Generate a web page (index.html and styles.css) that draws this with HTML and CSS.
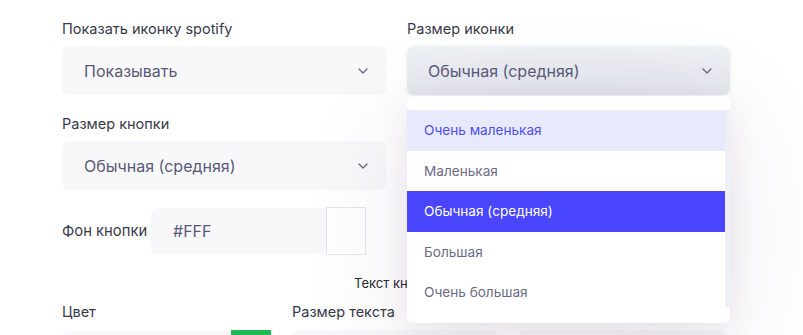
FILE: index.html
```html
<!DOCTYPE html>
<html lang="ru">
<head>
<meta charset="utf-8">
<link rel="stylesheet" href="styles.css">
</head>
<body>
<div class="page">
  <div class="row two">
    <div class="field">
      <div class="label">Показать иконку spotify</div>
      <div class="select">
        <span>Показывать</span>
        <svg class="chev" viewBox="0 0 10 6" width="10" height="6"><path d="M1 1l4 4 4-4" fill="none" stroke="#6b6b85" stroke-width="1.4" stroke-linecap="round" stroke-linejoin="round"/></svg>
      </div>
    </div>
    <div class="field">
      <div class="label">Размер иконки</div>
      <div class="select-wrap">
        <div class="select open">
          <span>Обычная (средняя)</span>
          <svg class="chev" viewBox="0 0 10 6" width="10" height="6"><path d="M1 1l4 4 4-4" fill="none" stroke="#6b6b85" stroke-width="1.4" stroke-linecap="round" stroke-linejoin="round"/></svg>
        </div>
        <div class="dropdown">
          <div class="list">
            <div class="item hover">Очень маленькая</div>
            <div class="item">Маленькая</div>
            <div class="item selected">Обычная (средняя)</div>
            <div class="item">Большая</div>
            <div class="item">Очень большая</div>
          </div>
        </div>
      </div>
    </div>
  </div>

  <div class="row two second">
    <div class="field">
      <div class="label">Размер кнопки</div>
      <div class="select">
        <span>Обычная (средняя)</span>
        <svg class="chev" viewBox="0 0 10 6" width="10" height="6"><path d="M1 1l4 4 4-4" fill="none" stroke="#6b6b85" stroke-width="1.4" stroke-linecap="round" stroke-linejoin="round"/></svg>
      </div>
    </div>
  </div>

  <div class="row inline">
    <div class="inline-label">Фон кнопки</div>
    <div class="color-field">
      <div class="color-input">#FFF</div>
      <div class="swatch white"></div>
    </div>
  </div>

  <div class="section-title">Текст кнопки</div>

  <div class="row three">
    <div class="field">
      <div class="label low">Цвет</div>
      <div class="color-field wide">
        <div class="color-input"></div>
        <div class="swatch green"></div>
      </div>
    </div>
    <div class="field">
      <div class="label low">Размер текста</div>
      <div class="plain-input"></div>
    </div>
    <div class="field">
      <div class="label low">Шрифт</div>
      <div class="plain-input"></div>
    </div>
  </div>
</div>
</body>
</html>
```

FILE: styles.css
```css
* { box-sizing: border-box; }
html, body { margin: 0; padding: 0; background: #ffffff; }
body {
  font-family: Inter, "Noto Sans", sans-serif;
  color: #3d3d4e;
  width: 803px;
  height: 335px;
  overflow: hidden;
}
.page {
  padding: 20px 73px 0 62px;
  width: 803px;
  height: 335px;
  overflow: hidden;
}
.row.two {
  display: grid;
  grid-template-columns: 324px 323px;
  column-gap: 21px;
}
.row.second { margin-top: 20px; }
.label {
  font-size: 14.5px;
  line-height: 18px;
  color: #3a3a4c;
  margin-bottom: 8px;
}
.label.low { margin-bottom: 9px; }
.select {
  height: 49px;
  background: #f8f8fa;
  border-radius: 7px;
  display: flex;
  align-items: center;
  justify-content: space-between;
  padding: 0 18px 0 22px;
  font-size: 16px;
  color: #5a5a78;
}
.select.open {
  background: linear-gradient(#eef1f5, #e4e7ee);
  padding-left: 21px;
  box-shadow: 0 1px 4px rgba(40, 40, 70, 0.07);
}
.chev { display: block; }
.select-wrap { position: relative; }
.dropdown {
  position: absolute;
  left: 0;
  top: 100%;
  margin-top: 1px;
  width: 323px;
  height: 227px;
  background: #ffffff;
  border-radius: 6px;
  padding: 14px 0 16px 0;
  box-shadow: 0 8px 30px rgba(50, 35, 75, 0.07), 0 20px 110px rgba(80, 50, 100, 0.11);
  z-index: 5;
}
.list {
  height: 197px;
  overflow: hidden;
  border-right: 5px solid #eef0f5;
}
.item {
  height: 40.5px;
  display: flex;
  align-items: center;
  padding-left: 17px;
  font-size: 13.6px;
  color: #6b6b85;
}
.item.hover { background: #e7e9fd; color: #4f4ef2; }
.item.selected { background: #4a45ff; color: #ffffff; }
.row.inline {
  margin-top: 17px;
  display: flex;
  align-items: center;
}
.inline-label {
  font-size: 14.8px;
  color: #3a3a4c;
  width: 89px;
}
.color-field {
  display: flex;
  align-items: center;
  width: 215px;
}
.color-input {
  flex: 1;
  height: 46px;
  background: #f8f8fa;
  border-radius: 7px 0 0 7px;
  display: flex;
  align-items: center;
  padding-left: 22px;
  font-size: 16px;
  color: #5a5a78;
  margin-right: -1px;
}
.swatch {
  width: 40px;
  height: 48px;
  flex: none;
}
.swatch.white { background: #ffffff; border: 1px solid #e6e6ea; }
.section-title {
  margin-top: 20px;
  text-align: center;
  font-size: 13px;
  line-height: 16px;
  color: #2a2a35;
}
.row.three {
  margin-top: 12px;
  display: grid;
  grid-template-columns: 209px 206px 208px;
  column-gap: 21px;
}
.color-field.wide { width: 209px; }
.swatch.green { background: #1db954; }
.plain-input {
  height: 46px;
  background: #f8f8fa;
  border-radius: 7px;
}
```
